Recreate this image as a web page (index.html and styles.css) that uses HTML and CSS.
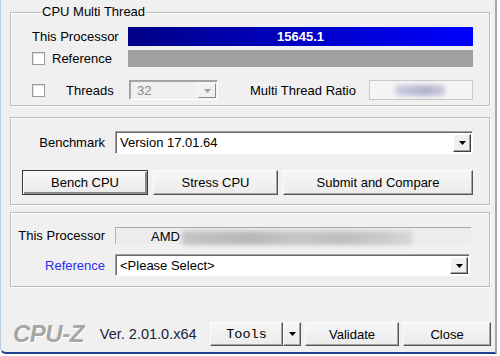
FILE: index.html
```html
<!doctype html>
<html>
<head>
<meta charset="utf-8">
<title>CPU-Z Bench</title>
<link rel="stylesheet" href="styles.css">
</head>
<body>
	<div class="window">
		<!-- multi thread -->
		<div class="group g-multi">
			<div class="group-title">CPU Multi Thread</div>
			<div class="row row-proc">
				<span class="lbl lbl-proc">This Processor</span>
				<div class="bar bar-score">15645.1</div>
			</div>
			<div class="row row-ref">
				<span class="chk"></span>
				<span class="lbl lbl-ref">Reference</span>
				<div class="bar bar-ref"></div>
			</div>
			<div class="row row-threads">
				<span class="chk"></span>
				<span class="lbl lbl-threads">Threads</span>
				<div class="combo combo-off">
					<span class="combo-val">32</span>
					<span class="drop drop-off"><svg width="7" height="4" viewBox="0 0 7 4"><path d="M0 0h7L3.5 4z" fill="#a0a0a0"/></svg></span>
				</div>
				<span class="lbl lbl-ratio">Multi Thread Ratio</span>
				<div class="ratio"><span class="smudge smudge-ratio"></span></div>
			</div>
		</div>

		<!-- benchmark -->
		<div class="group g-bench">
			<div class="row row-version">
				<span class="lbl lbl-col">Benchmark</span>
				<div class="combo combo-white">
					<span class="combo-val">Version 17.01.64</span>
					<span class="drop"><svg width="7" height="4" viewBox="0 0 7 4"><path d="M0 0h7L3.5 4z" fill="#000"/></svg></span>
				</div>
			</div>
			<div class="row row-btns">
				<div class="btn btn-default btn-bench">Bench CPU</div>
				<div class="btn btn-stress">Stress CPU</div>
				<div class="btn btn-submit">Submit and Compare</div>
			</div>
		</div>

		<!-- compare -->
		<div class="group g-compare">
			<div class="row row-this">
				<span class="lbl lbl-col">This Processor</span>
				<div class="cpu-name">AMD<span class="smudge smudge-cpu"></span></div>
			</div>
			<div class="row row-select">
				<span class="lbl lbl-col lbl-link">Reference</span>
				<div class="combo combo-white combo-select">
					<span class="combo-val">&lt;Please Select&gt;</span>
					<span class="drop"><svg width="7" height="4" viewBox="0 0 7 4"><path d="M0 0h7L3.5 4z" fill="#000"/></svg></span>
				</div>
			</div>
		</div>

		<!-- footer -->
		<div class="footer">
			<span class="logo">CPU-Z</span>
			<span class="ver">Ver. 2.01.0.x64</span>
			<div class="btn btn-tools">Tools</div>
			<div class="btn btn-arrow"><svg width="7" height="4" viewBox="0 0 7 4"><path d="M0 0h7L3.5 4z" fill="#000"/></svg></div>
			<div class="btn btn-validate">Validate</div>
			<div class="btn btn-close">Close</div>
		</div>
	</div>
</body>
</html>
```

FILE: styles.css
```css
*{
	margin: 0;
	padding: 0;
	box-sizing: border-box;
}
body{
	background: #fff;
	font-family: "Liberation Sans", Arial, sans-serif;
	font-size: 13px;
	color: #000;
}
.window{
	width: 497px;
	height: 354px;
	background: #f0f0f0;
	border-left: 1px solid #b8cde0;
	border-right: 2px solid #a9a9a9;
	border-bottom: 2px solid #23408c;
	border-bottom-left-radius: 6px;
	padding: 12px 5px 0 9px;
	display: flex;
	flex-direction: column;
}
.group{
	width: 480px;
	border: 1px solid #bcbcbc;
	box-shadow: inset 1px 1px #fff, 1px 1px #fff;
	display: flex;
	flex-direction: column;
}
.group-title{
	align-self: flex-start;
	margin: -8px 0 0 9px;
	padding: 0 1px;
	line-height: 14px;
	background: #f0f0f0;
}
.row{
	display: flex;
	align-items: center;
}
.lbl{
	white-space: nowrap;
}

/* multi thread */
.g-multi{
	padding: 0 16px 5px 21px;
}
.row-proc{
	margin-top: 8px;
	height: 19px;
}
.lbl-proc{
	width: 96px;
}
.bar{
	flex: 1;
	height: 100%;
}
.bar-score{
	background: linear-gradient(to right, #000088, #0000ff);
	color: #fff;
	font-weight: bold;
	text-align: center;
	line-height: 19px;
}
.row-ref{
	margin-top: 4px;
	height: 17px;
}
.chk{
	width: 13px;
	height: 13px;
	background: #fff;
	border: 1px solid #9a9a9a;
	box-shadow: inset 1px 1px #e0e0e0;
}
.lbl-ref{
	width: 76px;
	margin-left: 7px;
}
.bar-ref{
	background: #a0a0a0;
}
.row-threads{
	margin-top: 13px;
	height: 20px;
}
.lbl-threads{
	width: 63px;
	margin-left: 21px;
}
.combo{
	height: 100%;
	display: flex;
	align-items: stretch;
	border: 1px solid;
	border-color: #a0a0a0 #fff #fff #a0a0a0;
	box-shadow: inset 1px 1px #6a6a6a;
}
.combo-val{
	flex: 1;
	padding: 0 0 0 4px;
	display: flex;
	align-items: center;
	white-space: nowrap;
}
.combo-off{
	width: 89px;
	background: #f0f0f0;
	box-shadow: inset 1px 1px #a8a8a8;
}
.combo-off .combo-val{
	color: #8c8c8c;
	padding-left: 7px;
}
.drop{
	width: 18px;
	margin: 2px 1px 1px 0;
	display: flex;
	align-items: center;
	justify-content: center;
	background: #f0f0f0;
	border: 1px solid;
	border-color: #fff #404040 #404040 #fff;
	box-shadow: inset -1px -1px #a0a0a0;
}
.drop-off{
	border-color: #f8f8f8 #8a8a8a #8a8a8a #f8f8f8;
	box-shadow: none;
}
.lbl-ratio{
	width: 119px;
	margin-left: 32px;
}
.ratio{
	width: 104px;
	height: 100%;
	background: #f5f5f5;
	border: 1px solid #c8c8c8;
	display: flex;
	align-items: center;
	justify-content: center;
}
.smudge{
	display: block;
	filter: blur(2px);
}
.smudge-ratio{
	width: 50px;
	height: 11px;
	margin-left: -2px;
	background: linear-gradient(to right, #d0d0e2, #bcbcd4 40%, #b2b2cc 60%, #ccccdf);
	border-radius: 3px;
}

/* benchmark */
.g-bench{
	margin-top: 11px;
	padding: 13px 16px 9px 0;
}
.lbl-col{
	width: 96px;
	text-align: right;
	padding-right: 2px;
}
.row-version{
	height: 23px;
}
.combo-white{
	flex: 1;
	margin-left: 8px;
	background: #fff;
}
.row-btns{
	margin-top: 16px;
	padding-left: 11px;
	gap: 5px;
	height: 25px;
}
.btn{
	height: 100%;
	display: flex;
	align-items: center;
	justify-content: center;
	background: linear-gradient(#f7f7f7, #ebebeb);
	border: 1px solid;
	border-color: #fdfdfd #555 #555 #fdfdfd;
	box-shadow: inset -1px -1px #a6a6a6;
	white-space: nowrap;
}
.btn-default{
	border: 1px solid #3a3a3a;
	box-shadow: inset 1px 1px #fff, inset -2px -2px #8a8a8a;
}
.btn-bench{
	width: 126px;
}
.btn-stress{
	width: 125px;
}
.btn-submit{
	flex: 1;
}

/* compare */
.g-compare{
	margin-top: 7px;
	padding: 14px 18px 10px 0;
}
.row-this{
	height: 17px;
}
.cpu-name{
	flex: 1;
	height: 100%;
	margin-left: 8px;
	padding-left: 35px;
	display: flex;
	align-items: center;
	background: #ececec;
	border-top: 1px solid #a8a8a8;
	border-left: 1px solid #b4b4b4;
}
.smudge-cpu{
	width: 230px;
	height: 14px;
	margin: 4px 0 0 2px;
	background: linear-gradient(to right, #c4c4c4, #b8b8b8 30%, #c6c6c6 50%, #bebebe 70%, #d6d6d6);
}
.row-select{
	margin-top: 10px;
	height: 22px;
}
.combo-select{
	margin-right: 1px;
}
.lbl-link{
	color: #2b2bf0;
}

/* footer */
.footer{
	margin-top: 35px;
	height: 24px;
	display: flex;
	align-items: center;
	width: 481px;
}
.logo{
	margin-left: 3px;
	font-size: 24px;
	font-weight: bold;
	font-style: italic;
	color: #a6a6a6;
	text-shadow: 1px 1px #fff;
	letter-spacing: -0.5px;
}
.ver{
	margin-left: 16px;
	font-size: 14.5px;
	color: #1c2238;
}
.btn-tools{
	margin-left: auto;
	width: 73px;
	font-family: "Liberation Mono", "Courier New", monospace;
	font-size: 13.5px;
	color: #000;
}
.btn-arrow{
	width: 18px;
}
.btn-validate{
	width: 94px;
	margin-left: 4px;
}
.btn-close{
	width: 88px;
	margin-left: 4px;
}
```
